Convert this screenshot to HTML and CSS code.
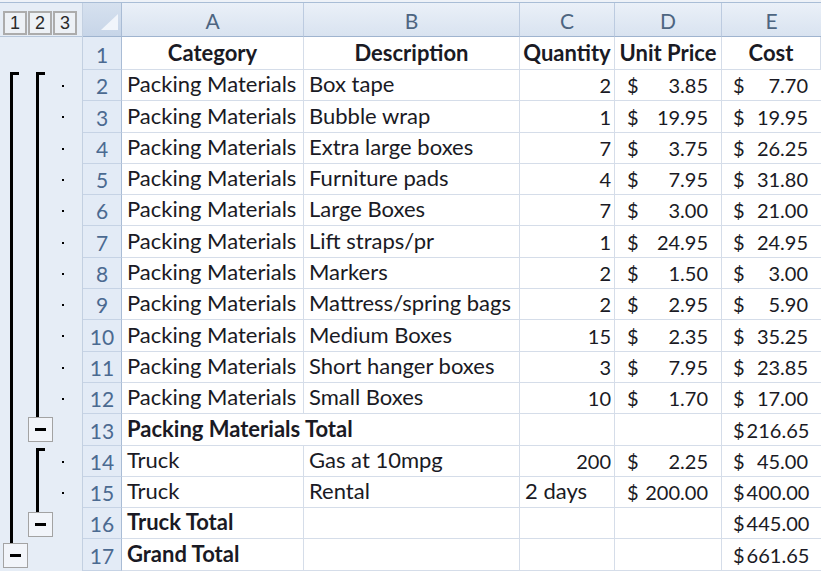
FILE: index.html
```html
<!DOCTYPE html>
<html>
<head>
<meta charset="utf-8">
<link rel="stylesheet" href="styles.css">
</head>
<body>
<div class="sheet">
  <div class="topbar"></div>
  <div class="main">
    <div class="gutter">
      <div class="levels">
        <span class="lvl">1</span><span class="lvl">2</span><span class="lvl">3</span>
      </div>
      <svg class="outline" width="82" height="534" viewBox="0 0 82 534">
        <!-- level 1 bracket -->
        <rect x="10" y="35" width="9" height="3" fill="#000"/>
        <rect x="10" y="35" width="3" height="471" fill="#000"/>
        <rect x="3.5" y="506.5" width="24" height="24" fill="#f2f5fa" stroke="#a3a3a3"/>
        <rect x="10" y="517" width="11" height="3" fill="#000"/>
        <!-- level 2 bracket (packing) -->
        <rect x="36" y="35" width="9" height="3" fill="#000"/>
        <rect x="36" y="35" width="3" height="345" fill="#000"/>
        <rect x="28.5" y="380.5" width="24" height="24" fill="#f2f5fa" stroke="#a3a3a3"/>
        <rect x="35" y="391" width="11" height="3" fill="#000"/>
        <!-- level 2 bracket (truck) -->
        <rect x="36" y="411" width="9" height="3" fill="#000"/>
        <rect x="36" y="411" width="3" height="64" fill="#000"/>
        <rect x="28.5" y="475.5" width="24" height="24" fill="#f2f5fa" stroke="#a3a3a3"/>
        <rect x="35" y="486" width="11" height="3" fill="#000"/>
        <!-- detail dots -->
        <g fill="#000">
          <rect x="62" y="48" width="2" height="2"/>
          <rect x="62" y="79" width="2" height="2"/>
          <rect x="62" y="111" width="2" height="2"/>
          <rect x="62" y="142" width="2" height="2"/>
          <rect x="62" y="173" width="2" height="2"/>
          <rect x="62" y="205" width="2" height="2"/>
          <rect x="62" y="236" width="2" height="2"/>
          <rect x="62" y="267" width="2" height="2"/>
          <rect x="62" y="298" width="2" height="2"/>
          <rect x="62" y="330" width="2" height="2"/>
          <rect x="62" y="361" width="2" height="2"/>
          <rect x="62" y="424" width="2" height="2"/>
          <rect x="62" y="455" width="2" height="2"/>
        </g>
      </svg>
    </div>
    <div class="grid">
      <div class="corner"><span class="tri"></span></div>
      <div class="ch">A</div><div class="ch">B</div><div class="ch">C</div><div class="ch">D</div><div class="ch last">E</div>

      <div class="rh">1</div>
      <div class="c b ctr">Category</div><div class="c b ctr">Description</div><div class="c b ctr">Quantity</div><div class="c b ctr">Unit Price</div><div class="c b ctr">Cost</div>

      <div class="rh">2</div>
      <div class="c">Packing Materials</div><div class="c">Box tape</div><div class="c num">2</div><div class="c acct"><span>$</span><span>3.85</span></div><div class="c acct e"><span>$</span><span>7.70</span></div>

      <div class="rh">3</div>
      <div class="c">Packing Materials</div><div class="c">Bubble wrap</div><div class="c num">1</div><div class="c acct"><span>$</span><span>19.95</span></div><div class="c acct e"><span>$</span><span>19.95</span></div>

      <div class="rh">4</div>
      <div class="c">Packing Materials</div><div class="c">Extra large boxes</div><div class="c num">7</div><div class="c acct"><span>$</span><span>3.75</span></div><div class="c acct e"><span>$</span><span>26.25</span></div>

      <div class="rh">5</div>
      <div class="c">Packing Materials</div><div class="c">Furniture pads</div><div class="c num">4</div><div class="c acct"><span>$</span><span>7.95</span></div><div class="c acct e"><span>$</span><span>31.80</span></div>

      <div class="rh">6</div>
      <div class="c">Packing Materials</div><div class="c">Large Boxes</div><div class="c num">7</div><div class="c acct"><span>$</span><span>3.00</span></div><div class="c acct e"><span>$</span><span>21.00</span></div>

      <div class="rh">7</div>
      <div class="c">Packing Materials</div><div class="c">Lift straps/pr</div><div class="c num">1</div><div class="c acct"><span>$</span><span>24.95</span></div><div class="c acct e"><span>$</span><span>24.95</span></div>

      <div class="rh">8</div>
      <div class="c">Packing Materials</div><div class="c">Markers</div><div class="c num">2</div><div class="c acct"><span>$</span><span>1.50</span></div><div class="c acct e"><span>$</span><span>3.00</span></div>

      <div class="rh">9</div>
      <div class="c">Packing Materials</div><div class="c">Mattress/spring bags</div><div class="c num">2</div><div class="c acct"><span>$</span><span>2.95</span></div><div class="c acct e"><span>$</span><span>5.90</span></div>

      <div class="rh">10</div>
      <div class="c">Packing Materials</div><div class="c">Medium Boxes</div><div class="c num">15</div><div class="c acct"><span>$</span><span>2.35</span></div><div class="c acct e"><span>$</span><span>35.25</span></div>

      <div class="rh">11</div>
      <div class="c">Packing Materials</div><div class="c">Short hanger boxes</div><div class="c num">3</div><div class="c acct"><span>$</span><span>7.95</span></div><div class="c acct e"><span>$</span><span>23.85</span></div>

      <div class="rh">12</div>
      <div class="c">Packing Materials</div><div class="c">Small Boxes</div><div class="c num">10</div><div class="c acct"><span>$</span><span>1.70</span></div><div class="c acct e"><span>$</span><span>17.00</span></div>

      <div class="rh">13</div>
      <div class="c b span2">Packing Materials Total</div><div class="c"></div><div class="c"></div><div class="c acct e tight"><span>$</span><span>216.65</span></div>

      <div class="rh">14</div>
      <div class="c">Truck</div><div class="c">Gas at 10mpg</div><div class="c num">200</div><div class="c acct"><span>$</span><span>2.25</span></div><div class="c acct e"><span>$</span><span>45.00</span></div>

      <div class="rh">15</div>
      <div class="c">Truck</div><div class="c">Rental</div><div class="c">2 days</div><div class="c acct"><span>$</span><span>200.00</span></div><div class="c acct e tight"><span>$</span><span>400.00</span></div>

      <div class="rh">16</div>
      <div class="c b">Truck Total</div><div class="c"></div><div class="c"></div><div class="c"></div><div class="c acct e tight"><span>$</span><span>445.00</span></div>

      <div class="rh">17</div>
      <div class="c b">Grand Total</div><div class="c"></div><div class="c"></div><div class="c"></div><div class="c acct e tight"><span>$</span><span>661.65</span></div>
    </div>
  </div>
</div>
</body>
</html>
```
FILE: styles.css
```css
html, body {
  margin: 0;
  padding: 0;
  background: #ffffff;
}
body {
  width: 821px;
  height: 571px;
  overflow: hidden;
  font-family: Lato, "Liberation Sans", sans-serif;
}
.sheet {
  display: flex;
  flex-direction: column;
  width: 821px;
}
.topbar {
  height: 3px;
  box-sizing: border-box;
  background: #eef2f8;
  border-bottom: 1px solid #a9bdd6;
}
.main {
  display: flex;
}
.gutter {
  width: 82px;
  flex: none;
  display: flex;
  flex-direction: column;
  background: #e6edf6;
  border-right: 1px solid #c3d0e1;
}
.levels {
  height: 34px;
  box-sizing: border-box;
  border-bottom: 1px solid #b6c6da;
  display: flex;
  align-items: flex-start;
  padding: 8px 0 0 3px;
  gap: 1px;
}
.lvl {
  width: 24px;
  height: 24px;
  box-sizing: border-box;
  border: 2px solid #acacac;
  background: #edf1f6;
  display: flex;
  align-items: center;
  justify-content: center;
  font-family: "Liberation Sans", Arial, sans-serif;
  font-size: 18px;
  color: #2a2a2a;
}
.outline {
  display: block;
}
.grid {
  display: grid;
  grid-template-columns: 39px 182px 216px 95px 107px 99px;
  grid-template-rows: 34px 33px repeat(16, 31.3px);
}
.corner {
  box-sizing: border-box;
  background: linear-gradient(#d6e1ef, #c7d5e8);
  border-right: 1px solid #a9bcd5;
  border-bottom: 1px solid #9fb4cf;
  position: relative;
}
.tri {
  position: absolute;
  right: 3px;
  bottom: 6px;
  width: 0;
  height: 0;
  border-left: 17px solid transparent;
  border-bottom: 16px solid #f1f5fb;
}
.ch {
  box-sizing: border-box;
  background: linear-gradient(#eaf0f8, #d9e3f0);
  border-right: 1px solid #bccbe0;
  border-bottom: 1px solid #9fb4cf;
  display: flex;
  align-items: center;
  justify-content: center;
  font-size: 21px;
  color: #4d6581;
  padding-top: 2px;
}
.ch.last {
  border-right: none;
}
.rh {
  box-sizing: border-box;
  background: #e3ebf6;
  border-right: 1px solid #a9bcd5;
  border-bottom: 1px solid #c6d3e5;
  display: flex;
  align-items: flex-end;
  justify-content: center;
  padding-bottom: 2px;
  font-size: 21px;
  color: #4b6a91;
}
.c {
  box-sizing: border-box;
  border-right: 1px solid #d5dde9;
  border-bottom: 1px solid #d5dde9;
  display: flex;
  align-items: flex-end;
  padding: 0 4px 3px 5px;
  font-size: 22px;
  color: #1a1a24;
  white-space: nowrap;
  overflow: visible;
}
.c.b {
  font-weight: 700;
}
.c.ctr {
  justify-content: center;
  padding-left: 0;
  padding-right: 0;
}
.c.num {
  justify-content: flex-end;
  padding-right: 3px;
  font-size: 20px;
}
.c.acct {
  justify-content: space-between;
  padding-left: 12px;
  padding-right: 13px;
  font-size: 20px;
}
.c.acct.e {
  padding-left: 11px;
  border-right: none;
}
.c.acct.tight {
  justify-content: flex-start;
  gap: 2px;
}
.span2 {
  grid-column: span 2;
}
```
